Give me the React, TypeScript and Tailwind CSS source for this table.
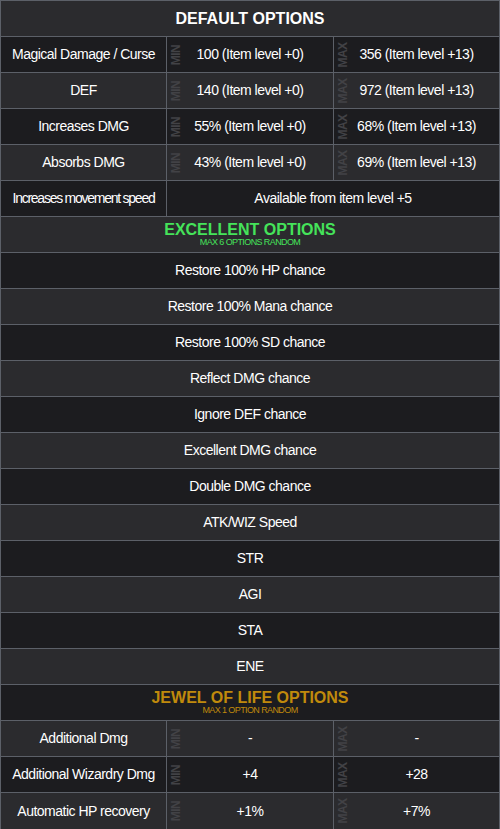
import React from 'react';

type Row =
  | { kind: 'header'; title: string; sub?: string; color: string }
  | { kind: 'triple'; label: string; min: string; max: string }
  | { kind: 'span'; label: string; value: string }
  | { kind: 'single'; label: string };

const rows: Row[] = [
  { kind: 'header', title: 'DEFAULT OPTIONS', color: 'text-white' },
  { kind: 'triple', label: 'Magical Damage / Curse', min: '100 (Item level +0)', max: '356 (Item level +13)' },
  { kind: 'triple', label: 'DEF', min: '140 (Item level +0)', max: '972 (Item level +13)' },
  { kind: 'triple', label: 'Increases DMG', min: '55% (Item level +0)', max: '68% (Item level +13)' },
  { kind: 'triple', label: 'Absorbs DMG', min: '43% (Item level +0)', max: '69% (Item level +13)' },
  { kind: 'span', label: 'Increases movement speed', value: 'Available from item level +5' },
  { kind: 'header', title: 'EXCELLENT OPTIONS', sub: 'MAX 6 OPTIONS RANDOM', color: 'text-[#45e35a]' },
  { kind: 'single', label: 'Restore 100% HP chance' },
  { kind: 'single', label: 'Restore 100% Mana chance' },
  { kind: 'single', label: 'Restore 100% SD chance' },
  { kind: 'single', label: 'Reflect DMG chance' },
  { kind: 'single', label: 'Ignore DEF chance' },
  { kind: 'single', label: 'Excellent DMG chance' },
  { kind: 'single', label: 'Double DMG chance' },
  { kind: 'single', label: 'ATK/WIZ Speed' },
  { kind: 'single', label: 'STR' },
  { kind: 'single', label: 'AGI' },
  { kind: 'single', label: 'STA' },
  { kind: 'single', label: 'ENE' },
  { kind: 'header', title: 'JEWEL OF LIFE OPTIONS', sub: 'MAX 1 OPTION RANDOM', color: 'text-[#c08a0c]' },
  { kind: 'triple', label: 'Additional Dmg', min: '-', max: '-' },
  { kind: 'triple', label: 'Additional Wizardry Dmg', min: '+4', max: '+28' },
  { kind: 'triple', label: 'Automatic HP recovery', min: '+1%', max: '+7%' },
];

function Tag({ text }: { text: string }) {
  return (
    <span className="absolute left-[4px] top-1/2 -translate-y-1/2 rotate-180 [writing-mode:vertical-rl] text-[12px] font-bold leading-[10px] text-[#424246]">
      {text}
    </span>
  );
}

function Cell({ children, className = '' }: { children: React.ReactNode; className?: string }) {
  return (
    <div className={`relative flex items-center justify-center text-center text-[14px] tracking-[-0.5px] text-white ${className}`}>
      {children}
    </div>
  );
}

export default function App() {
  return (
    <div className="w-[500px] border border-[#5c6068] font-['Liberation_Sans',Arial,sans-serif]">
      {rows.map((row, i) => {
        const bg = i % 2 === 0 ? 'bg-[#2b2b2e]' : 'bg-[#1c1c1f]';
        const line = i < rows.length - 1 ? 'border-b border-[#5c6068]' : '';
        const base = `h-[36px] ${line} ${bg}`;

        if (row.kind === 'header') {
          return (
            <div key={i} className={`${base} flex flex-col items-center justify-center ${row.color}`}>
              <div className="text-[16px] font-bold leading-[16px]">{row.title}</div>
              {row.sub && <div className="text-[9px] leading-[9px] tracking-[-0.6px]">{row.sub}</div>}
            </div>
          );
        }

        if (row.kind === 'single') {
          return (
            <div key={i} className={`${base} flex items-center justify-center text-[14px] tracking-[-0.5px] text-white`}>
              {row.label}
            </div>
          );
        }

        if (row.kind === 'span') {
          return (
            <div key={i} className={`${base} grid grid-cols-[165px_333px]`}>
              <Cell className="!tracking-[-1.25px]">{row.label}</Cell>
              <Cell className="border-l border-[#5c6068]">{row.value}</Cell>
            </div>
          );
        }

        return (
          <div key={i} className={`${base} grid grid-cols-[165px_167px_166px]`}>
            <Cell>{row.label}</Cell>
            <Cell className="border-l border-[#5c6068]">
              <Tag text="MIN" />
              {row.min}
            </Cell>
            <Cell className="border-l border-[#5c6068]">
              <Tag text="MAX" />
              {row.max}
            </Cell>
          </div>
        );
      })}
    </div>
  );
}
